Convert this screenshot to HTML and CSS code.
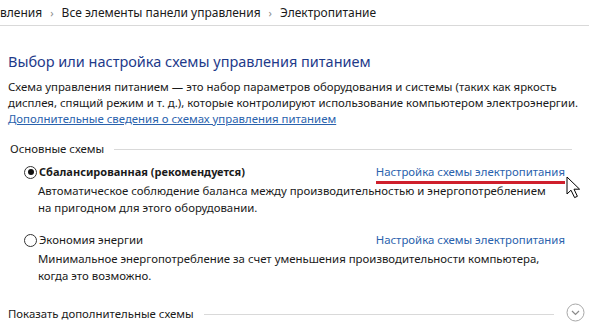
FILE: index.html
```html
<!DOCTYPE html>
<html lang="ru">
<head>
    <meta charset="UTF-8">
    <title>Электропитание</title>
    <link rel="stylesheet" href="styles.css">
</head>
<body>
    <div class="breadcrumb">
        <span>вления</span>
        <span class="sep">›</span>
        <span>Все элементы панели управления</span>
        <span class="sep">›</span>
        <span>Электропитание</span>
    </div>

    <div class="content">
        <h1>Выбор или настройка схемы управления питанием</h1>
        <p class="intro">
            Схема управления питанием — это набор параметров оборудования и системы (таких как яркость<br>
            дисплея, спящий режим и т. д.), которые контролируют использование компьютером электроэнергии.<br>
            <a href="#">Дополнительные сведения о схемах управления питанием</a>
        </p>

        <div class="group-title">
            <span>Основные схемы</span>
            <span class="rule"></span>
        </div>

        <div class="plan">
            <div class="plan-head">
                <span class="radio checked"></span>
                <span class="plan-name bold">Сбалансированная (рекомендуется)</span>
                <a href="#" class="plan-link marked">Настройка схемы электропитания
                    <svg class="cursor" width="18" height="23" viewBox="0 0 18 23">
                        <path d="M1 1 L1 18 L5 14.2 L8.6 21.6 L11.4 20.3 L8 13.2 L13.6 13.2 Z" fill="#fff" stroke="#000" stroke-width="1" stroke-linejoin="round"/>
                    </svg>
                </a>
            </div>
            <div class="plan-desc">
                Автоматическое соблюдение баланса между производительностью и энергопотреблением<br>
                на пригодном для этого оборудовании.
            </div>
        </div>

        <div class="plan">
            <div class="plan-head">
                <span class="radio"></span>
                <span class="plan-name">Экономия энергии</span>
                <a href="#" class="plan-link">Настройка схемы электропитания</a>
            </div>
            <div class="plan-desc">
                Минимальное энергопотребление за счет уменьшения производительности компьютера,<br>
                когда это возможно.
            </div>
        </div>

        <div class="group-title more">
            <span>Показать дополнительные схемы</span>
            <span class="rule"></span>
            <svg class="expand" width="19" height="19" viewBox="0 0 19 19">
                <circle cx="9.5" cy="9.5" r="8.5" fill="none" stroke="#a8a8a8" stroke-width="1"/>
                <path d="M6 8 L9.5 11.5 L13 8" fill="none" stroke="#8a8a8a" stroke-width="1.2"/>
            </svg>
        </div>
    </div>
</body>
</html>
```

FILE: styles.css
```css
body {
    margin: 0;
    background-color: #fff;
    font-family: "Noto Sans", "Open Sans", sans-serif;
    font-size: 11.4px;
    color: #1a1a1a;
    overflow: hidden;
}
.breadcrumb {
    display: flex;
    align-items: center;
    gap: 8px;
    height: 26px;
    margin-top: -1px;
    border-bottom: 1px solid #d9d9d9;
    font-size: 12px;
    color: #1a1a1a;
    white-space: nowrap;
}
.breadcrumb .sep {
    color: #8c8c8c;
    font-size: 11px;
}
.content {
    padding: 0 8px;
}
h1 {
    margin: 25px 0 8px 0;
    font-size: 14.5px;
    font-weight: normal;
    color: #1e3a8a;
    line-height: 20px;
}
.intro {
    margin: 0;
    line-height: 16px;
    white-space: nowrap;
}
a {
    color: #2a62ad;
    text-decoration: none;
}
.intro a {
    text-decoration: underline;
}
.group-title {
    display: flex;
    align-items: center;
    gap: 10px;
    margin-top: 14px;
    padding-left: 2px;
    line-height: 16px;
}
.group-title .rule {
    flex: 1;
    height: 1px;
    background-color: #d9d9d9;
    margin-right: 9px;
}
.plan {
    margin-top: 6px;
    padding-left: 16px;
}
.plan + .plan {
    margin-top: 15px;
}
.plan-head {
    display: flex;
    align-items: center;
    line-height: 18px;
}
.radio {
    width: 11px;
    height: 11px;
    border: 1px solid #333;
    border-radius: 50%;
    margin-right: 2px;
    display: flex;
    align-items: center;
    justify-content: center;
}
.radio.checked::after {
    content: "";
    width: 6px;
    height: 6px;
    border-radius: 50%;
    background-color: #111;
}
.bold {
    font-weight: bold;
    font-size: 11px;
}
.plan-link {
    margin-left: auto;
    margin-right: 16px;
    position: relative;
}
.plan-link.marked {
    border-bottom: 3px solid #cf1f2c;
    margin-bottom: -3px;
}
.cursor {
    position: absolute;
    right: -19px;
    top: 13px;
}
.plan-desc {
    padding-left: 14px;
    line-height: 17px;
    margin-top: 1px;
    white-space: nowrap;
}
.group-title.more {
    margin-top: 22px;
    padding-left: 0;
}
.group-title.more .rule {
    margin-right: 2px;
}
.expand {
    margin-right: -4px;
    margin-top: -3px;
}
```
